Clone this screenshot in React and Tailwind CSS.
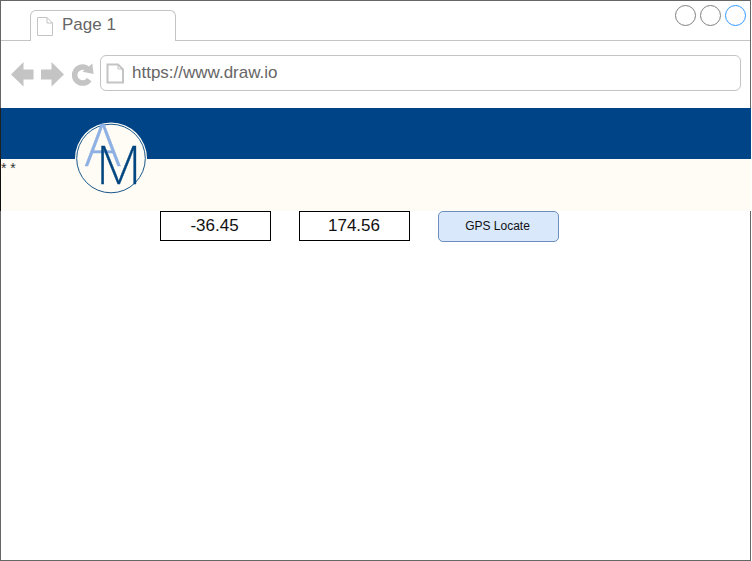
const PageIcon = ({ className, heavy }) => (
  <svg className={className} viewBox="0 0 18 21" fill="none" stroke="#c4c4c4" strokeWidth={heavy ? 2 : 1}>
    {heavy ? (
      <>
        <path d="M1.5 1.5H12L17 6.5V19.5H1.5Z" />
        <path d="M12 1.5V6H17" strokeWidth="1" />
      </>
    ) : (
      <path d="M1.5 1.5H11L16.5 7V19.5H1.5ZM11 1.5V7H16.5" />
    )}
  </svg>
);

const Toolbar = () => (
  <div className="flex h-[67px] pl-[10px] pt-[14px]">
    <svg className="mt-[6px] h-[26px] w-[89px] shrink-0" viewBox="0 0 89 26" fill="#c4c4c4">
      <path d="M0 13.5L12.5 1V8.5H22.5V18.5H12.5V25.5Z" />
      <path d="M53 13.5L40.5 1V8.5H30V18.5H40.5V25.5Z" />
      <path
        d="M77 7.3A8 8 0 1 0 79 18.4"
        fill="none"
        stroke="#c4c4c4"
        strokeWidth="5.6"
        transform="translate(-0.8 0.2)"
      />
      <path d="M81.3 2.5L82.6 12.9L71.5 10.8Z" />
    </svg>
    <div className="flex h-[36px] w-[641px] rounded-[6px] border border-[#c4c4c4] pl-[5px] pt-[7px]">
      <PageIcon heavy className="h-[21px] w-[18px]" />
      <span className="ml-[8px] text-[17px] leading-[20px] text-[#666666]">https://www.draw.io</span>
    </div>
  </div>
);

const Tabs = () => (
  <div className="flex h-[40px]">
    <div className="w-[29px] border-b border-[#c4c4c4]" />
    <div className="mt-[9px] flex w-[146px] rounded-t-[6px] border border-b-0 border-[#c4c4c4] pl-[5px] pt-[5px]">
      <PageIcon className="h-[21px] w-[18px]" />
      <span className="ml-[8px] mt-[-1px] text-[17px] leading-[20px] text-[#666666]">Page 1</span>
    </div>
    <div className="flex flex-1 justify-end gap-[4px] border-b border-[#c4c4c4] pr-[4px] pt-[4px]">
      <div className="size-[21px] rounded-full border border-[#808080]" />
      <div className="size-[21px] rounded-full border border-[#808080]" />
      <div className="size-[21px] rounded-full border border-[#3399ff]" />
    </div>
  </div>
);

const Logo = () => (
  <svg
    className="absolute left-[74px] top-[13px] size-[74px] overflow-visible"
    viewBox="0 0 74 74"
    style={{ fontFamily: 'Inter, "Liberation Sans", sans-serif', fontWeight: 200 }}
  >
    <circle cx="37" cy="37.5" r="36" fill="#fffcf5" />
    <circle cx="37" cy="37.5" r="34.3" fill="none" stroke="#19568a" strokeWidth="1" />
    <text x="28.8" y="45" fontSize="57" textAnchor="middle" fill="#8eb0e3" stroke="#8eb0e3" strokeWidth="0.4" textLength="39" lengthAdjust="spacingAndGlyphs">A</text>
    <text x="44.7" y="63" fontSize="52" textAnchor="middle" fill="#00457f" stroke="#00457f" strokeWidth="0.4" textLength="45" lengthAdjust="spacingAndGlyphs">M</text>
  </svg>
);

export default function App() {
  return (
    <div
      className="h-[561px] w-[751px] border border-[#666666] bg-white"
      style={{ fontFamily: '"Liberation Sans", Arial, sans-serif' }}
    >
      <Tabs />
      <Toolbar />
      <div className="relative -ml-px w-[751px]">
        <div className="h-[51px] border-l border-[#202020] bg-[#004488]" />
        <div className="h-[52px] border-l border-[#101010] bg-[#fffcf5] pt-[1px] text-[14px] leading-[16px] text-[#333333]">* *</div>
        <Logo />
      </div>
      <div className="flex gap-[28px] pl-[159px] text-[#111111]">
        <div className="h-[30px] w-[111px] border border-black pr-[2px] text-center text-[17px] leading-[28px]">-36.45</div>
        <div className="h-[30px] w-[111px] border border-black pr-[1px] text-center text-[17px] leading-[28px]">174.56</div>
        <button className="h-[31px] w-[121px] rounded-[5px] border border-[#6c8ebf] bg-[#dae8fc] pb-[2px] pr-[2px] text-[12px]">
          GPS Locate
        </button>
      </div>
    </div>
  );
}
